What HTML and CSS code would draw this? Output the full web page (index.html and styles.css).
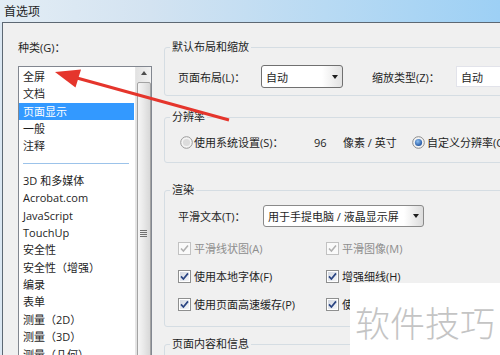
FILE: index.html
```html
<!DOCTYPE html>
<html lang="zh-CN">
<head>
    <meta charset="UTF-8">
    <title>首选项</title>
    <link rel="stylesheet" href="styles.css">
</head>
<body>
    <svg class="defs" width="0" height="0">
        <defs>
            <linearGradient id="box-fill" x1="0" y1="0" x2="1" y2="1">
                <stop offset="0" stop-color="#d4d9e2"/>
                <stop offset="1" stop-color="#f4f6f9"/>
            </linearGradient>
            <radialGradient id="dot-fill" cx="0.4" cy="0.35" r="0.7">
                <stop offset="0" stop-color="#8ec0f2"/>
                <stop offset="1" stop-color="#1c4f9c"/>
            </radialGradient>
            <symbol id="check-on" viewBox="0 0 13 13">
                <rect x="0.5" y="0.5" width="12" height="12" fill="#fff" stroke="#8e8f8f"/>
                <rect x="2" y="2" width="9" height="9" fill="url(#box-fill)"/>
                <path d="M3 6.4 L5.4 9 L10 3.4" fill="none" stroke="#2a4583" stroke-width="1.7"/>
            </symbol>
            <symbol id="check-off" viewBox="0 0 13 13">
                <rect x="0.5" y="0.5" width="12" height="12" fill="#fafafa" stroke="#c2c2c2"/>
                <path d="M3 6.4 L5.4 9 L10 3.4" fill="none" stroke="#b0b0b0" stroke-width="1.5"/>
            </symbol>
            <symbol id="radio-off" viewBox="0 0 13 13">
                <circle cx="6.5" cy="6.5" r="5.8" fill="#f4f4f4" stroke="#9a9a9a"/>
                <circle cx="6.5" cy="6.5" r="3.6" fill="#dcdcdc"/>
            </symbol>
            <symbol id="radio-on" viewBox="0 0 13 13">
                <circle cx="6.5" cy="6.5" r="5.8" fill="#f4f4f4" stroke="#8a8a8a"/>
                <circle cx="6.5" cy="6.5" r="3.6" fill="url(#dot-fill)"/>
            </symbol>
        </defs>
    </svg>

    <div class="titlebar">首选项</div>

    <div class="frame">
        <div class="dialog">
            <div class="sidebar">
                <div class="side-label">种类(G)：</div>
                <div class="listbox">
                    <ul class="items">
                        <li>全屏</li>
                        <li>文档</li>
                        <li class="selected">页面显示</li>
                        <li>一般</li>
                        <li>注释</li>
                        <li class="sep"></li>
                        <li>3D 和多媒体</li>
                        <li>Acrobat.com</li>
                        <li>JavaScript</li>
                        <li>TouchUp</li>
                        <li>安全性</li>
                        <li>安全性（增强）</li>
                        <li>编录</li>
                        <li>表单</li>
                        <li>测量（2D）</li>
                        <li>测量（3D）</li>
                        <li>测量（几何）</li>
                    </ul>
                    <div class="scrollbar">
                        <div class="sb-up"></div>
                        <div class="sb-thumb"><span class="grip"></span></div>
                    </div>
                </div>
            </div>

            <div class="content">
                <fieldset class="group g-layout">
                    <legend>默认布局和缩放</legend>
                    <div class="row combo-row">
                        <span class="field-label w-layout">页面布局(L)：</span>
                        <span class="combo c-layout">自动<i class="arrow"></i></span>
                        <span class="field-label w-zoom">缩放类型(Z)：</span>
                        <span class="combo edit">自动</span>
                    </div>
                </fieldset>

                <fieldset class="group g-res">
                    <legend>分辨率</legend>
                    <div class="row res-row">
                        <svg class="radio" width="13" height="13"><use href="#radio-off"/></svg>
                        <span class="res-label">使用系统设置(S)：</span>
                        <span class="res-value">96</span>
                        <span class="res-unit">像素 / 英寸</span>
                        <svg class="radio" width="13" height="13"><use href="#radio-on"/></svg>
                        <span class="res-label">自定义分辨率(C)：</span>
                    </div>
                </fieldset>

                <fieldset class="group g-render">
                    <legend>渲染</legend>
                    <div class="row text-row">
                        <span class="field-label w-text">平滑文本(T)：</span>
                        <span class="combo c-text">用于手提电脑 / 液晶显示屏<i class="arrow"></i></span>
                    </div>
                    <div class="row check-row">
                        <span class="check-item disabled">
                            <svg width="13" height="13"><use href="#check-off"/></svg>平滑线状图(A)
                        </span>
                        <span class="check-item disabled">
                            <svg width="13" height="13"><use href="#check-off"/></svg>平滑图像(M)
                        </span>
                    </div>
                    <div class="row check-row">
                        <span class="check-item">
                            <svg width="13" height="13"><use href="#check-on"/></svg>使用本地字体(F)
                        </span>
                        <span class="check-item">
                            <svg width="13" height="13"><use href="#check-on"/></svg>增强细线(H)
                        </span>
                    </div>
                    <div class="row check-row">
                        <span class="check-item">
                            <svg width="13" height="13"><use href="#check-on"/></svg>使用页面高速缓存(P)
                        </span>
                        <span class="check-item">
                            <svg width="13" height="13"><use href="#check-on"/></svg>使用矢量图形(V)
                        </span>
                    </div>
                </fieldset>

                <fieldset class="group g-info">
                    <legend>页面内容和信息</legend>
                </fieldset>
            </div>
        </div>
    </div>

    <!-- annotation arrow pointing at the list -->
    <svg class="pointer" width="500" height="355" viewBox="0 0 500 355">
        <line x1="77" y1="78" x2="229" y2="120" stroke="#e5352c" stroke-width="3"/>
        <polygon points="55,72 81,69.5 75.5,87.5" fill="#e5352c"/>
    </svg>

    <div class="watermark">软件技巧</div>
</body>
</html>
```

FILE: styles.css
```css
* {
    box-sizing: border-box;
    margin: 0;
    padding: 0;
}

body {
    width: 500px;
    height: 355px;
    overflow: hidden;
    position: relative;
    font-family: "Open Sans", "Noto Sans CJK SC", sans-serif;
    font-size: 11px;
    color: #1e1e1e;
    background: #dbe7f2;
}

.defs {
    position: absolute;
}

.titlebar {
    height: 22px;
    padding-left: 4px;
    line-height: 21px;
    font-size: 12px;
    font-family: "Noto Sans CJK SC", sans-serif;
    background: linear-gradient(to right, #e3edf5 0%, #d3e3f1 30%, #b8daf3 65%, #9dd0f5 100%);
}

.frame {
    height: 333px;
    padding-left: 2px;
}

.dialog {
    display: flex;
    height: 100%;
    background: #f0f0f0;
    border-left: 1px solid #5d6873;
    border-top: 1px solid #5d6873;
}

/* left column: category list */
.sidebar {
    flex: none;
    width: 149px;
    padding: 18px 0 0 15px;
}

.side-label {
    line-height: 14px;
    margin-bottom: 11px;
}

.listbox {
    display: flex;
    width: 134px;
    height: 320px;
    background: #fff;
    border: 1px solid #828790;
}

.items {
    flex: 1;
    list-style: none;
    padding-top: 1px;
}

.items li {
    height: 17.35px;
    line-height: 17.35px;
    padding-left: 4px;
    margin-right: 1px;
    white-space: nowrap;
}

.items li.selected {
    background: #3399ff;
    color: #fff;
}

.items li.sep {
    padding: 8px 5px 0 4px;
}

.items li.sep::before {
    content: '';
    display: block;
    border-top: 1px solid #9cc3ea;
}

.scrollbar {
    flex: none;
    width: 16px;
    display: flex;
    flex-direction: column;
    align-items: center;
    background: linear-gradient(to right, #e2e2e2, #f2f2f2);
    border-left: 1px solid #e6e6e6;
}

.sb-up {
    width: 100%;
    height: 18px;
    display: flex;
    align-items: center;
    justify-content: center;
}

.sb-up::before {
    content: '';
    border-left: 3.5px solid transparent;
    border-right: 3.5px solid transparent;
    border-bottom: 4px solid #4d4d4d;
}

.sb-thumb {
    width: 14px;
    height: 420px;
    margin-top: 2px;
    display: flex;
    align-items: center;
    justify-content: center;
    border: 1px solid #a3a3a3;
    border-radius: 2px;
    background: linear-gradient(to right, #f6f6f6, #e8e8e8 50%, #d8d8d8);
}

.grip {
    width: 7px;
    height: 7px;
    background: repeating-linear-gradient(to bottom, #707070 0 1px, transparent 1px 2px);
}

/* right column: option groups */
.content {
    flex: none;
    width: 360px;
    margin-left: 12px;
    padding-top: 17px;
}

.group {
    min-width: 0;
    padding: 0 0 0 13px;
    border: 1px solid #d5dde3;
    border-radius: 3px;
}

.group legend {
    line-height: 14px;
    padding: 0 2px;
    margin-left: -8px;
}

.row {
    display: flex;
    align-items: center;
    white-space: nowrap;
}

.row > * {
    flex: none;
}

.g-layout {
    padding-top: 11px;
    padding-bottom: 7px;
}

.combo-row {
    height: 23px;
}

.w-layout {
    width: 83px;
}

.w-zoom {
    width: 84px;
    margin-left: 29px;
}

.w-text {
    width: 85px;
}

.combo {
    display: flex;
    align-items: center;
    height: 23px;
    padding-left: 4px;
    border: 1px solid #707070;
    border-radius: 3px;
    background: linear-gradient(to right, #fff 75%, #e2e2e2);
}

.combo .arrow {
    margin-left: auto;
    margin-right: 4px;
    border-left: 3.5px solid transparent;
    border-right: 3.5px solid transparent;
    border-top: 4px solid #1e1e1e;
}

.c-layout {
    width: 82px;
}

.c-text {
    width: 161px;
    height: 22px;
    border-color: #8a8a8a;
    background: linear-gradient(to right, #fff 88%, #dcdcdc);
}

.combo.edit {
    width: 80px;
    height: 21px;
    border-color: #e2e3ea;
    border-radius: 0;
    background: #fff;
}

.g-res {
    margin-top: 14px;
    padding-top: 9px;
    padding-bottom: 11px;
}

.res-row {
    height: 18px;
}

.radio {
    margin-left: 2px;
}

.res-label {
    margin-left: 1px;
    width: 120px;
}

.res-label:last-child {
    width: auto;
    margin-left: 2px;
}

.res-value {
    width: 29px;
}

.res-unit {
    width: 67px;
}

.g-render {
    margin-top: 20px;
    padding-top: 8px;
    padding-bottom: 14px;
}

.text-row {
    height: 22px;
}

.check-row {
    height: 16px;
    margin-top: 12px;
}

.text-row + .check-row {
    margin-top: 13px;
}

.check-item {
    display: flex;
    align-items: center;
    width: 148px;
}

.check-item svg {
    flex: none;
    margin-right: 3px;
}

.check-item.disabled {
    color: #8d8d8d;
}

.g-info {
    margin-top: 10px;
    height: 60px;
}

/* overlays */
.pointer {
    position: absolute;
    left: 0;
    top: 0;
    pointer-events: none;
}

.watermark {
    position: absolute;
    left: 350px;
    top: 283px;
    width: 150px;
    height: 72px;
    padding: 4px 0 0 5px;
    background: #fff;
    color: #c4c4c4;
    font-family: "Noto Sans CJK SC", sans-serif;
    font-size: 35px;
    font-weight: 300;
    line-height: 70px;
    white-space: nowrap;
}
```
